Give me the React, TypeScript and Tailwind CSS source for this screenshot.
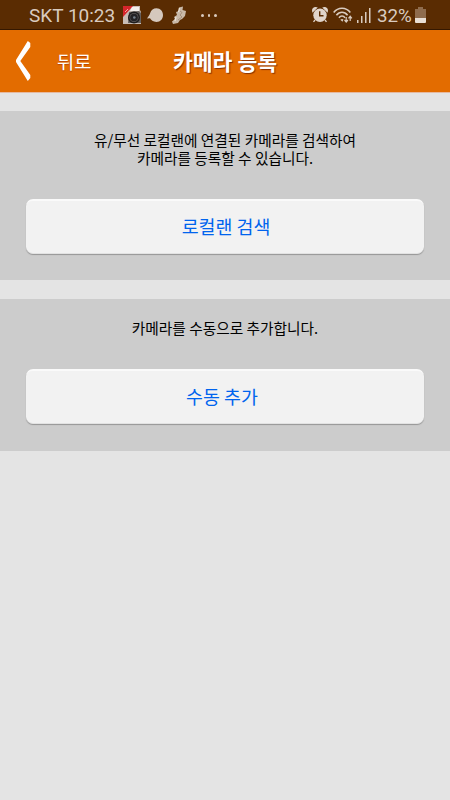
import React from 'react';

const CameraIcon = () => (
  <svg width="18" height="18" viewBox="0 0 18 18">
    <path d="M1 0H17V4L18 6V18H0V1Z" fill="#c9bdb5" />
    <path d="M0 0H10L0 11Z" fill="#d6262b" />
    <path d="M2 6L5 3" stroke="#f3a5a0" strokeWidth="1" />
    <path d="M9 1H16V5H7Z" fill="#f4f0ec" />
    <path d="M6 6L16 5L18 7V17H5Z" fill="#66605c" />
    <circle cx="11" cy="11.5" r="6" fill="#1d1c1d" />
    <circle cx="11" cy="11.5" r="4.6" fill="#5f5a59" />
    <circle cx="11" cy="11.5" r="3.8" fill="#242326" />
    <circle cx="11.3" cy="11.5" r="1.3" fill="#77828c" />
  </svg>
);

const BubbleIcon = () => (
  <svg width="17" height="15" viewBox="0 0 17 15">
    <path d="M3.2 5C4 2 6.500 .2 9.500 .2C13.500 .2 16 3.300 16 7C16 11 13.300 13.900 9.500 13.900C6 13.900 4 12 3 10.200L0 10.400C1.500 8.500 2.500 7 3.200 5Z" fill="#d5c8bd" />
  </svg>
);

const FeatherIcon = () => (
  <svg width="15" height="19" viewBox="0 0 15 19">
    <path d="M7 1.500L11 .5L10.500 4L14 5L13 10L10 13L8 14L6 17L1 18L0 15.500L3 13L2 11L5 9L4 6L7 5Z" fill="#c9b9a8" />
    <path d="M8 5L10 6.500L8 9L10 11L6 14" stroke="#9a8570" strokeWidth=".8" fill="none" />
    <path d="M7.500 2L6.500 6M4 11L3 15" stroke="#ebe1d6" strokeWidth="1.300" />
  </svg>
);

const AlarmIcon = () => (
  <svg width="16" height="16" viewBox="0 0 16 16">
    <path d="M.8 4.400C.2 2 2 .2 4.500 .8ZM11.500 .8C14 .2 15.800 2 15.200 4.400ZM3 13L1.500 14.800M13 13L14.500 14.800" fill="#e0d4ca" stroke="#e0d4ca" strokeWidth="1.300" />
    <circle cx="8" cy="8.300" r="6.700" fill="#e0d4ca" />
    <path d="M7.700 4.300V8.700H11.500" stroke="#5a2c02" strokeWidth="1.400" fill="none" />
  </svg>
);

const WifiIcon = () => (
  <svg width="20" height="17" viewBox="0 0 20 17" fill="none" stroke="#d9cbbf">
    <path d="M.7 5.500C5-.2 13-.2 17.300 5.500M3.400 8.200C6.500 4.200 11.500 4.200 14.600 8.200M6 10.700C7.700 8.400 10.300 8.400 12 10.700" strokeWidth="1.600" />
    <path d="M7.300 12.800Q9 11.200 10.500 12.500L9.500 14.800Z" fill="#d9cbbf" stroke="none" />
    <path d="M13.200 10V14.500M11.500 13L13.200 15L14.900 13M17.200 14V9.500M15.500 11.300L17.200 9.300L18.900 11.300" strokeWidth="1.200" />
  </svg>
);

const SignalIcon = () => (
  <svg width="14" height="16" viewBox="0 0 14 16" fill="#d9cbbf">
    <rect x="0" y="12" width="1.500" height="3" />
    <rect x="4" y="8" width="1.500" height="7" />
    <rect x="8" y="4" width="1.500" height="11" />
    <rect x="12" y="0" width="1.500" height="15" />
  </svg>
);

const BatteryIcon = () => (
  <svg width="11" height="16" viewBox="0 0 11 16">
    <path d="M3 0H8V2H11V11H0V2H3Z" fill="#8f6c4d" />
    <path d="M0 11H11V15Q11 16 10 16H1Q0 16 0 15Z" fill="#e9dfd5" />
  </svg>
);

const StatusBar = () => (
  <div className="flex h-[30px] items-start border-b border-[#351800] bg-[#5a2c02] font-[Roboto,sans-serif] text-[#d9cbbf]">
    <span className="ml-[29px] mt-[5px] w-[94px] whitespace-nowrap text-[19px] leading-[22px]">SKT 10:23</span>
    <span className="mt-[6px]"><CameraIcon /></span>
    <span className="ml-[6px] mt-[8px]"><BubbleIcon /></span>
    <span className="ml-[8px] mt-[6px]"><FeatherIcon /></span>
    <span className="ml-[14px] mt-[14px] flex gap-[4px]">
      <i className="size-[2.5px] rounded-full bg-[#d9cbbf]" />
      <i className="size-[2.5px] rounded-full bg-[#d9cbbf]" />
      <i className="size-[2.5px] rounded-full bg-[#d9cbbf]" />
    </span>
    <span className="ml-auto mt-[7px]"><AlarmIcon /></span>
    <span className="ml-[5px] mt-[7px]"><WifiIcon /></span>
    <span className="ml-[4px] mt-[8px]"><SignalIcon /></span>
    <span className="ml-[6px] mt-[5px] w-[38px] whitespace-nowrap text-[18.8px] leading-[22px]">32%</span>
    <span className="mr-[24px] mt-[7px]"><BatteryIcon /></span>
  </div>
);

const Header = () => (
  <header className="grid h-[63px] grid-cols-[1fr_auto_1fr] items-center border-b border-[#e6b9a0] bg-[#e36c00] text-white">
    <button type="button" className="flex items-center text-left">
      <svg className="ml-[15px]" width="17" height="42" viewBox="0 0 17 42">
        <path d="M12.800 1L15.300 3V7L5.300 21L15.300 35V38L12.800 41L1 22V20Z" fill="#fff" />
      </svg>
      <span className="ml-[25px] text-[18.7px] leading-[24px] [text-shadow:0_1px_1px_#b94500]">뒤로</span>
    </button>
    <h1 className="text-[21.6px] font-bold leading-[28px] [text-shadow:1px_1px_1px_#893000]">카메라 등록</h1>
  </header>
);

type PanelProps = {
  label: string;
  className: string;
  children: React.ReactNode;
};

const Panel = ({ label, className, children }: PanelProps) => (
  <section className={`mt-[18px] bg-[#ccc] px-[26px] ${className}`}>
    <p className="text-center text-[14.7px] leading-[18px] text-black">{children}</p>
    <button
      type="button"
      className="h-[55px] w-full rounded-[7px] border-b border-t-2 border-b-[#e2e2e2] border-t-[#fafafa] bg-[#f2f2f2] text-[18.4px] text-[#0064ee] shadow-[0_1px_1px_#969696]"
    >
      {label}
    </button>
  </section>
);

const App = () => (
  <div className="h-[800px] w-[450px] overflow-hidden bg-[#e4e4e4] font-['Noto_Sans_CJK_KR',sans-serif]">
    <StatusBar />
    <Header />
    <Panel label="로컬랜 검색" className="h-[169px] pt-[20px] [&>button]:mt-[32px] [&>button]:pl-[2px]">
      유/무선 로컬랜에 연결된 카메라를 검색하여
      <br />
      카메라를 등록할 수 있습니다.
    </Panel>
    <div className="h-px" />
    <Panel label="수동 추가" className="h-[152px] pt-[20px] [&>button]:mt-[32px] [&>button]:pr-[6px]">
      카메라를 수동으로 추가합니다.
    </Panel>
  </div>
);

export default App;
